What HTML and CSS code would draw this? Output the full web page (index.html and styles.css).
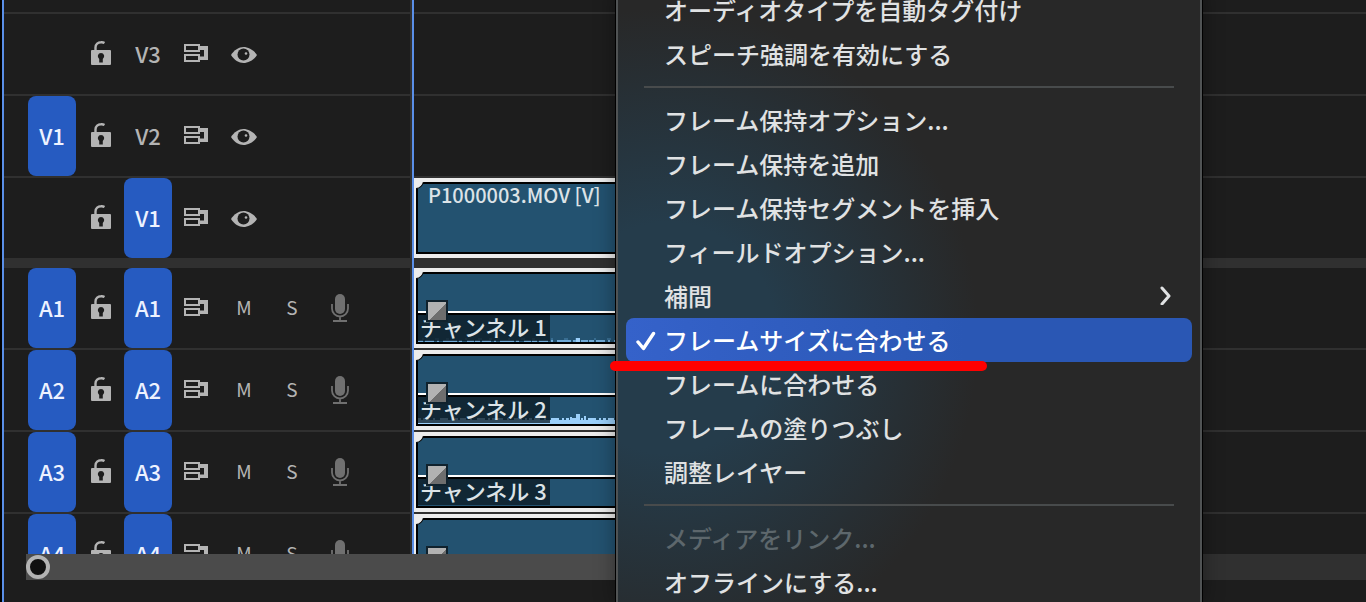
FILE: index.html
```html
<!DOCTYPE html>
<html lang="ja">
<head>
    <meta charset="UTF-8">
    <meta name="viewport" content="width=device-width, initial-scale=1.0">
    <title>タイムライン</title>
    <link rel="stylesheet" href="styles.css">
</head>
<body>
    <!-- shared icons -->
    <svg class="sprite" aria-hidden="true">
        <symbol id="lock" viewBox="0 0 22 26">
            <path d="M6.500 10V6.500C6.500 3 9 1.300 12 1.300Q14 1.100 15.500 2" fill="none" stroke="currentColor" stroke-width="2.400"/>
            <path fill="currentColor" fill-rule="evenodd" d="M3 9H21Q22 9 22 10V23Q22 24 21 24H3Q2 24 2 23V10Q2 9 3 9ZM12 12A3.300 3.300 0 0 0 10.200 18V21.500H13.800V18A3.300 3.300 0 0 0 12 12Z"/>
        </symbol>
        <symbol id="sync" viewBox="0 0 24 26">
            <path d="M1 4H15V10H1ZM1 14H15V20H1Z" fill="none" stroke="currentColor" stroke-width="2"/>
            <path d="M16 5H24V19H16V15.500H20V9H16Z" fill="currentColor"/>
        </symbol>
        <symbol id="eye" viewBox="0 0 26 26">
            <path fill="currentColor" d="M0 14C3 9 8 6 12.500 6S23 9 26 14C23 19 17 22 12.500 22S3 19 0 14Z"/>
            <circle cx="12.500" cy="13.500" r="6" fill="#1d1d1d"/>
            <circle cx="15" cy="12.500" r="1.300" fill="currentColor"/>
        </symbol>
        <symbol id="mic" viewBox="0 0 18 28">
            <rect x="4" y="0" width="10" height="20" rx="5" fill="currentColor"/>
            <path d="M1 10V14.500A8 8 0 0 0 17 14.500V10M9 22.500V27M2 27H16" fill="none" stroke="currentColor" stroke-width="1.800"/>
        </symbol>
    </svg>

    <div class="panel">
        <div class="tracks">
            <div class="headers">
                <div class="row top"></div>
                <div class="row">
                    <span></span>
                    <button class="icon" aria-label="ロック"><svg width="22" height="26"><use href="#lock"/></svg></button>
                    <button class="name">V3</button>
                    <button class="icon" aria-label="同期ロック"><svg width="24" height="26"><use href="#sync"/></svg></button>
                    <button class="icon" aria-label="表示"><svg width="26" height="26"><use href="#eye"/></svg></button>
                </div>
                <div class="row">
                    <button class="name on">V1</button>
                    <button class="icon" aria-label="ロック"><svg width="22" height="26"><use href="#lock"/></svg></button>
                    <button class="name">V2</button>
                    <button class="icon" aria-label="同期ロック"><svg width="24" height="26"><use href="#sync"/></svg></button>
                    <button class="icon" aria-label="表示"><svg width="26" height="26"><use href="#eye"/></svg></button>
                </div>
                <div class="row last-video">
                    <span></span>
                    <button class="icon" aria-label="ロック"><svg width="22" height="26"><use href="#lock"/></svg></button>
                    <button class="name on">V1</button>
                    <button class="icon" aria-label="同期ロック"><svg width="24" height="26"><use href="#sync"/></svg></button>
                    <button class="icon" aria-label="表示"><svg width="26" height="26"><use href="#eye"/></svg></button>
                </div>
                <div class="row">
                    <button class="name on">A1</button>
                    <button class="icon" aria-label="ロック"><svg width="22" height="26"><use href="#lock"/></svg></button>
                    <button class="name on">A1</button>
                    <button class="icon" aria-label="同期ロック"><svg width="24" height="26"><use href="#sync"/></svg></button>
                    <button class="letter">M</button>
                    <button class="letter">S</button>
                    <button class="icon mic" aria-label="録音"><svg width="18" height="28"><use href="#mic"/></svg></button>
                </div>
                <div class="row">
                    <button class="name on">A2</button>
                    <button class="icon" aria-label="ロック"><svg width="22" height="26"><use href="#lock"/></svg></button>
                    <button class="name on">A2</button>
                    <button class="icon" aria-label="同期ロック"><svg width="24" height="26"><use href="#sync"/></svg></button>
                    <button class="letter">M</button>
                    <button class="letter">S</button>
                    <button class="icon mic" aria-label="録音"><svg width="18" height="28"><use href="#mic"/></svg></button>
                </div>
                <div class="row">
                    <button class="name on">A3</button>
                    <button class="icon" aria-label="ロック"><svg width="22" height="26"><use href="#lock"/></svg></button>
                    <button class="name on">A3</button>
                    <button class="icon" aria-label="同期ロック"><svg width="24" height="26"><use href="#sync"/></svg></button>
                    <button class="letter">M</button>
                    <button class="letter">S</button>
                    <button class="icon mic" aria-label="録音"><svg width="18" height="28"><use href="#mic"/></svg></button>
                </div>
                <div class="row">
                    <button class="name on">A4</button>
                    <button class="icon" aria-label="ロック"><svg width="22" height="26"><use href="#lock"/></svg></button>
                    <button class="name on">A4</button>
                    <button class="icon" aria-label="同期ロック"><svg width="24" height="26"><use href="#sync"/></svg></button>
                    <button class="letter">M</button>
                    <button class="letter">S</button>
                    <button class="icon mic" aria-label="録音"><svg width="18" height="28"><use href="#mic"/></svg></button>
                </div>
            </div>

            <div class="lanes">
                <div class="lane top"></div>
                <div class="lane"></div>
                <div class="lane"></div>
                <div class="lane last-video">
                    <div class="clip"><div class="clip-body video">P1000003.MOV [V]</div></div>
                </div>
                <div class="lane">
                    <div class="clip">
                        <div class="clip-body">
                            <div class="volume"></div>
                            <div class="channel">
                                <svg class="wave" width="400" height="12">
                                    <path d="M0 11H400" stroke="#6fa9d6" stroke-width="2" stroke-dasharray="5 2 9 3 2 4 14 2 3 5 7 1"/>
                                    <path d="M4 9H400" stroke="#4f88b3" stroke-width="1" stroke-dasharray="2 11 4 7 3 16"/>
                                    <path d="M158 8H162V12H158Z" fill="#9bd0fb"/>
                                </svg>
                                <span class="label">チャンネル 1</span>
                            </div>
                            <span class="fx"></span>
                        </div>
                    </div>
                </div>
                <div class="lane">
                    <div class="clip">
                        <div class="clip-body">
                            <div class="volume"></div>
                            <div class="channel">
                                <svg class="wave" width="400" height="12">
                                    <path d="M0 10H400" stroke="#9bd0fb" stroke-width="4"/>
                                    <path d="M0 7H400" stroke="#9bd0fb" stroke-width="2" stroke-dasharray="3 2 6 4 2 5 8 3 2 2"/>
                                    <path d="M158 2H162V8H158ZM152 5H154V8H152ZM166 4H168V8H166Z" fill="#9bd0fb"/>
                                </svg>
                                <span class="label">チャンネル 2</span>
                            </div>
                            <span class="fx"></span>
                        </div>
                    </div>
                </div>
                <div class="lane">
                    <div class="clip">
                        <div class="clip-body">
                            <div class="volume"></div>
                            <div class="channel"><span class="label">チャンネル 3</span></div>
                            <span class="fx"></span>
                        </div>
                    </div>
                </div>
                <div class="lane">
                    <div class="clip">
                        <div class="clip-body">
                            <div class="volume"></div>
                            <div class="channel"></div>
                            <span class="fx"></span>
                        </div>
                    </div>
                </div>
            </div>
        </div>

        <div class="scrollbar">
            <div class="thumb"><span class="grip"></span></div>
        </div>
    </div>

    <div class="menu" role="menu">
        <button role="menuitem">オーディオタイプを自動タグ付け</button>
        <button role="menuitem">スピーチ強調を有効にする</button>
        <hr>
        <button role="menuitem">フレーム保持オプション...</button>
        <button role="menuitem">フレーム保持を追加</button>
        <button role="menuitem">フレーム保持セグメントを挿入</button>
        <button role="menuitem">フィールドオプション...</button>
        <button role="menuitem">補間
            <svg class="arrow" width="14" height="20" viewBox="0 0 14 20"><path d="M4 3L11 11L4 19" fill="none" stroke="currentColor" stroke-width="3" stroke-linecap="round" stroke-linejoin="round"/></svg>
        </button>
        <button role="menuitem" class="selected">
            <svg class="check" width="20" height="20" viewBox="0 0 20 20"><path d="M2 11L7.500 17.500L17.500 2.500" fill="none" stroke="currentColor" stroke-width="3.400" stroke-linecap="round" stroke-linejoin="round"/></svg>フレームサイズに合わせる
            <span class="marker"></span>
        </button>
        <button role="menuitem">フレームに合わせる</button>
        <button role="menuitem">フレームの塗りつぶし</button>
        <button role="menuitem">調整レイヤー</button>
        <hr>
        <button role="menuitem" disabled>メディアをリンク...</button>
        <button role="menuitem">オフラインにする...</button>
    </div>
</body>
</html>
```
FILE: styles.css
```css
* {
    box-sizing: border-box;
}

body {
    margin: 0;
    padding-left: 2px;
    height: 100vh;
    overflow: hidden;
    background: #000;
    color: #b4b4b4;
    font-family: "Noto Sans CJK JP", sans-serif;
    font-size: 22px;
    font-weight: 500;
}

button {
    margin: 0;
    padding: 0;
    border: none;
    background: none;
    color: inherit;
    font: inherit;
}

.sprite {
    position: absolute;
    width: 0;
    height: 0;
}

.panel {
    display: flex;
    flex-direction: column;
    height: 100%;
    padding-bottom: 22px;
    border-left: 2px solid #5a8fe8;
    background: #1d1d1d;
}

.tracks {
    display: flex;
    flex: 1;
    min-height: 0;
    overflow: hidden;
}

/* Track headers */
.headers {
    flex: none;
    width: 408px;
    border-right: 2px solid #303030;
}

.row,
.lane {
    height: 82px;
    border-bottom: 2px solid #303030;
}

.row {
    display: grid;
    grid-template-columns: repeat(7, 48px);
    padding-left: 24px;
}

.top {
    height: 14px;
}

.last-video {
    height: 90px;
    border-bottom-width: 10px;
}

.icon {
    display: flex;
    align-items: center;
    justify-content: center;
}

.mic {
    color: #707070;
}

.name {
    padding-bottom: 2px;
}

.name.on {
    border-radius: 8px;
    background: #265bc1;
    color: #edf2ff;
}

.letter {
    padding-bottom: 4px;
    font-size: 19px;
    font-weight: 400;
}

/* Clips */
.lanes {
    flex: 1;
    min-width: 0;
    border-left: 2px solid #5a8fe8;
}

.clip {
    position: relative;
    width: 400px;
    height: 80px;
    border: 4px solid #ececec;
    border-left-width: 2px;
    overflow: hidden;
    background: #ececec;
}

.clip::before {
    content: "";
    position: absolute;
    left: -8px;
    top: -10px;
    width: 14px;
    height: 15px;
    border: 1px solid #000;
    border-radius: 50%;
    background: #ececec;
    z-index: 1;
}

.clip-body {
    position: relative;
    height: 72px;
    border: 2px solid #000;
    background: #235270;
    color: #dce3e7;
}

.video {
    padding-left: 10px;
    font-size: 20px;
    line-height: 22px;
}

.volume {
    height: 41px;
    border-bottom: 2px solid #000;
    box-shadow: inset 0 -2px #fff;
}

.channel {
    position: relative;
    height: 27px;
}

.wave {
    position: absolute;
    left: 0;
    bottom: 0;
}

.label {
    position: relative;
    display: block;
    width: 132px;
    height: 26px;
    padding-left: 2px;
    background: rgba(12, 26, 34, 0.75);
    line-height: 22px;
    white-space: nowrap;
}

.fx {
    position: absolute;
    left: 8px;
    top: 26px;
    width: 22px;
    height: 22px;
    border: 2px solid #10222d;
    background: linear-gradient(135deg, #b2b2b2 54%, #6e6e6e 54%);
}

/* Horizontal scrollbar */
.scrollbar {
    flex: none;
    height: 26px;
    margin-left: 22px;
    background: #303030;
}

.thumb {
    display: flex;
    align-items: center;
    width: 60%;
    height: 100%;
    background: #4b4b4b;
}

.grip {
    width: 24px;
    height: 24px;
    border: 4px solid #b4b4b4;
    border-radius: 50%;
    background: #111;
}

/* Context menu, scrolled past the top of the window */
.menu {
    position: absolute;
    left: 616px;
    top: -12px;
    width: 586px;
    padding: 0 8px;
    border: solid #505354;
    border-width: 0 2px;
    background: radial-gradient(ellipse 310px 330px at 50px 350px, #253c4b 35%, #282828 100%) #282828;
    box-shadow: 0 0 0 1px #000, 0 0 20px rgba(0, 0, 0, 0.4);
    color: #e0e2e3;
    font-size: 24px;
}

.menu button {
    position: relative;
    display: flex;
    align-items: center;
    width: 100%;
    height: 44px;
    padding: 0 20px 2px 38px;
    border-radius: 8px;
    white-space: nowrap;
}

.menu hr {
    height: 2px;
    margin: 10px 18px;
    border: none;
    background: #484b4c;
}

.menu button:disabled {
    color: #5d676c;
}

.menu .selected {
    background: linear-gradient(90deg, #3562ca, #2a57b4 60%);
    color: #fff;
}

.arrow {
    margin-left: auto;
}

.check {
    position: absolute;
    left: 10px;
    top: 13px;
}

.marker {
    position: absolute;
    left: -16px;
    bottom: -9px;
    width: 377px;
    height: 10px;
    border-radius: 5px;
    background: #f00;
    z-index: 1;
}
```
